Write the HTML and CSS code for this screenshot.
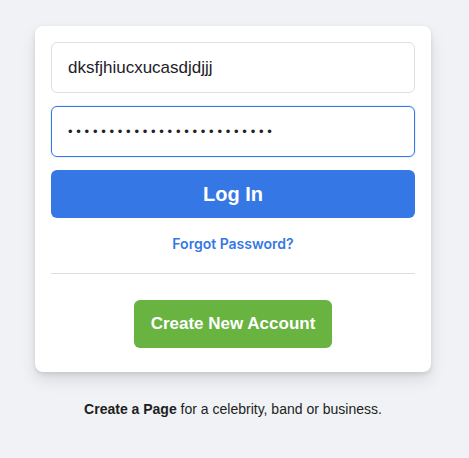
FILE: index.html
```html
<!DOCTYPE html>
<html>
<head>
<meta charset="utf-8">
<link rel="stylesheet" href="styles.css">
</head>
<body>
<div class="page">
  <div class="card">
    <input class="field" type="text" value="dksfjhiucxucasdjdjjj">
    <input class="field focused" type="password" value="abcdefghijklmnopqrstuvwxy">
    <button class="login">Log In</button>
    <a class="forgot" href="#">Forgot Password?</a>
    <div class="divider"></div>
    <div class="create-row"><button class="create">Create New Account</button></div>
  </div>
  <p class="footer"><b>Create a Page</b> for a celebrity, band or business.</p>
</div>
</body>
</html>
```
FILE: styles.css
```css
html, body { margin: 0; padding: 0; }
body {
  background: #f0f2f5;
  font-family: "Liberation Sans", Arial, sans-serif;
  color: #1c1e21;
}
.page {
  padding-top: 26px;
  padding-right: 3px;
  display: flex;
  flex-direction: column;
  align-items: center;
}
.card {
  width: 396px;
  box-sizing: border-box;
  background: #fff;
  border-radius: 8px;
  box-shadow: 0 2px 4px rgba(0,0,0,.1), 0 8px 16px rgba(0,0,0,.1);
  padding: 16px 16px 24px;
  display: flex;
  flex-direction: column;
}
.field {
  box-sizing: border-box;
  height: 51px;
  width: 100%;
  border: 1px solid #dddfe2;
  border-radius: 6px;
  padding: 0 16px;
  font-family: "Liberation Sans", Arial, sans-serif;
  font-size: 17px;
  color: #1d2129;
  outline: none;
  margin-bottom: 13px;
}
.field.focused {
  border-color: #3578e5;
  box-shadow: 0 0 0 1px #e7f3ff;
  letter-spacing: 3.75px;
  font-size: 13px;
}
.login {
  height: 48px;
  width: 100%;
  border: none;
  border-radius: 6px;
  background: #3578e5;
  color: #fff;
  font-family: "Liberation Sans", Arial, sans-serif;
  font-size: 20px;
  font-weight: bold;
}
.forgot {
  align-self: center;
  margin-top: 17px;
  color: #3578e5;
  font-family: Inter, "Liberation Sans", sans-serif;
  font-size: 14px;
  font-weight: 600;
  text-decoration: none;
  line-height: 18px;
}
.divider {
  border-bottom: 1px solid #dadde1;
  margin: 20px 0 26px;
}
.create-row { display: flex; justify-content: center; }
.create {
  height: 48px;
  padding: 0 17px;
  border: none;
  border-radius: 6px;
  background: #69b341;
  color: #fff;
  font-family: "Liberation Sans", Arial, sans-serif;
  font-size: 17px;
  font-weight: bold;
}
.footer {
  margin: 29px 0 0;
  font-size: 14px;
  color: #1c1e21;
}
```
